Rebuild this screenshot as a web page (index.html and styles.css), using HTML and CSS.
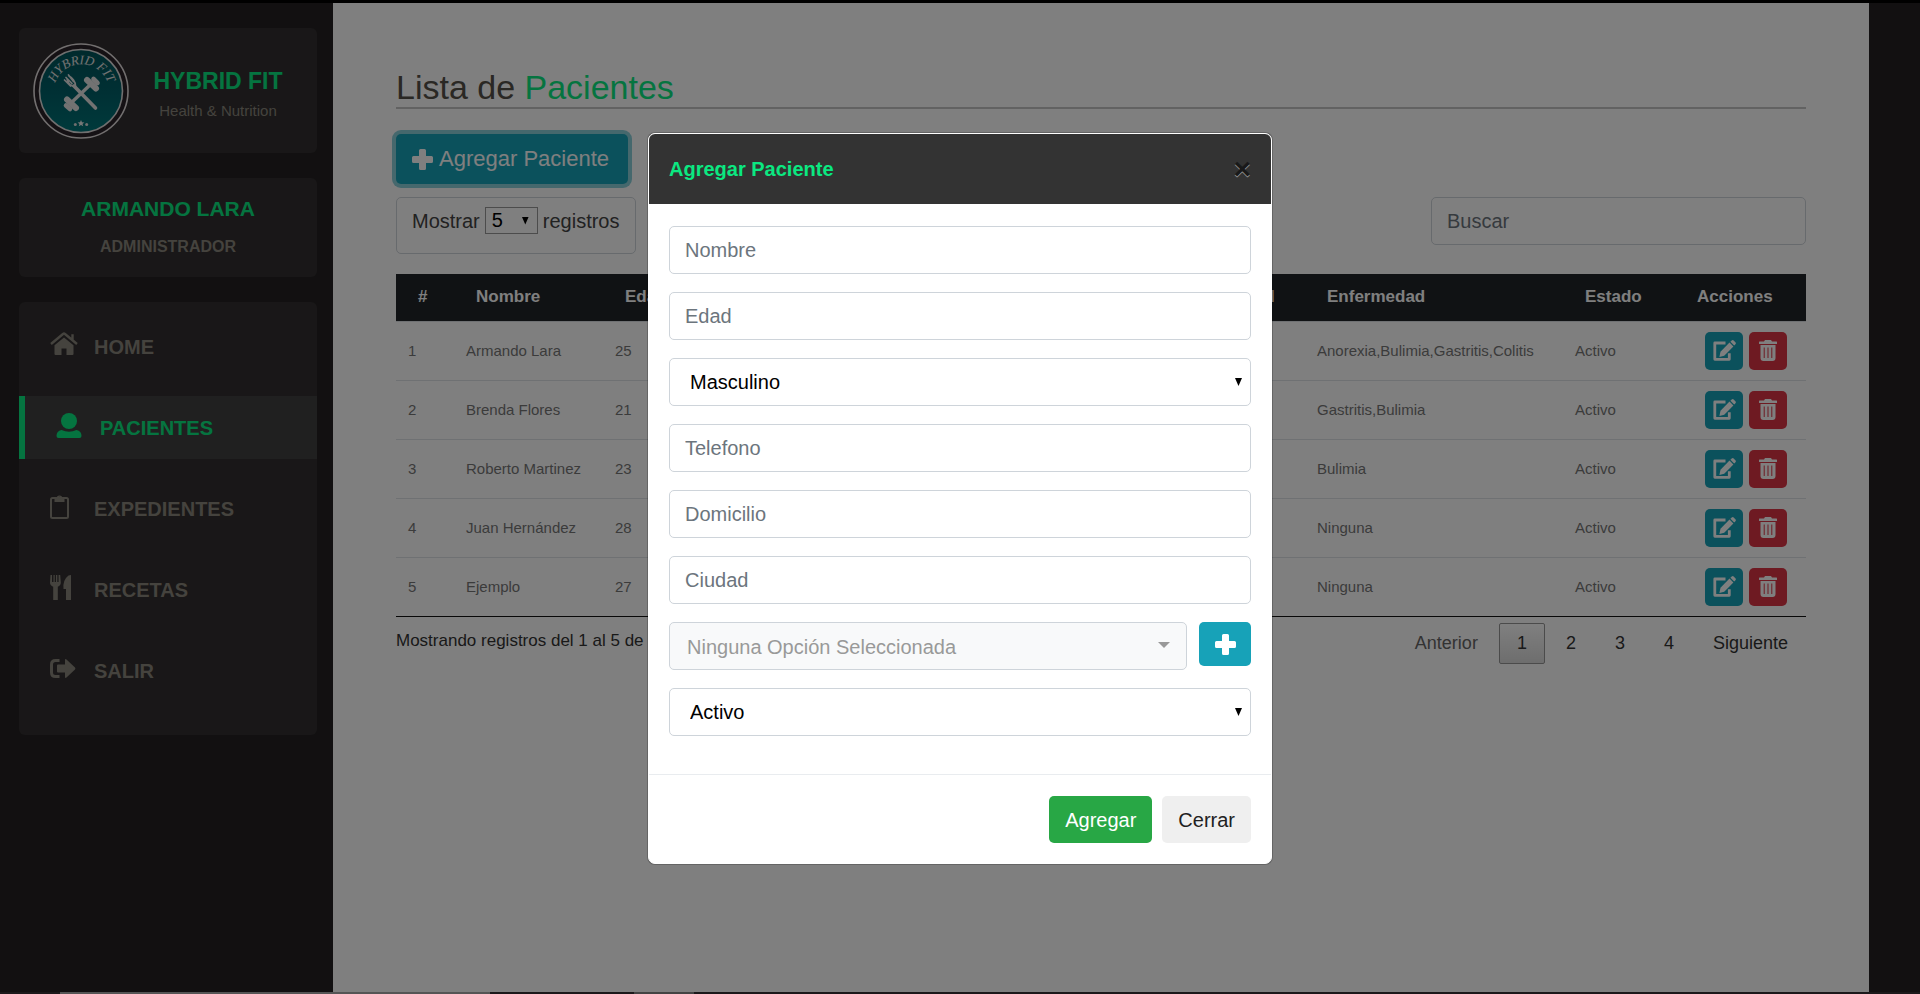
FILE: index.html
```html
<!DOCTYPE html>
<html lang="es">
<head>
<meta charset="utf-8">
<title>Hybrid Fit - Pacientes</title>
<link rel="stylesheet" href="styles.css">
</head>
<body>
<svg class="symbols" aria-hidden="true">
  <symbol id="plus" viewBox="0 0 21 21"><path d="M8.500 0h4q1.500 0 1.500 1.500V7h5.500Q21 7 21 8.500v4q0 1.500-1.500 1.500H14v5.500q0 1.500-1.500 1.500h-4Q7 21 7 19.500V14H1.500Q0 14 0 12.500v-4Q0 7 1.500 7H7V1.500Q7 0 8.500 0z"/></symbol>
  <symbol id="edit" viewBox="0 0 23 21"><path d="M12.500 3H1.800v16.300h14.500v-6" fill="none" stroke="currentColor" stroke-width="2.800" stroke-linejoin="round"/><path d="M16.500 2.600l3.900 3.900-9.200 9.200-4.800 1.300 1.100-5.200z"/><path d="M17.400 1.700l1.300-1.200q1-.9 2 0l1.700 1.700q.9 1 0 2l-1.200 1.300z"/></symbol>
  <symbol id="trash" viewBox="0 0 18 21"><path d="M6 0h6l1 1.500h4.500q.5 0 .5.500v2H0V2q0-.5.500-.5H5z"/><path fill-rule="evenodd" d="M1.500 5h15v13q0 3-3 3h-9q-3 0-3-3zM4.700 7.500v10.500h1V7.500zM8.500 7.500v10.500h1V7.500zM12.300 7.500v10.500h1V7.500z"/></symbol>
</svg>
<div class="screen-edge"></div>
<div class="shell">
  <aside class="sidebar">
    <section class="card brand">
      <svg class="logo" viewBox="0 0 96 96" role="img" aria-label="Hybrid Fit">
        <defs>
          <linearGradient id="disc" x1="0" y1="0" x2="0" y2="1"><stop offset="0" stop-color="#00545a"/><stop offset=".5" stop-color="#006068"/><stop offset="1" stop-color="#007478"/></linearGradient>
          <path id="arc" d="M21 44A28 28 0 0 1 76 44"/>
        </defs>
        <circle cx="48" cy="48" r="47" fill="#2b2228" stroke="#e4dede" stroke-width="1.600"/>
        <circle cx="48" cy="48" r="41.500" fill="url(#disc)" stroke="#e0dede" stroke-width="1.600"/>
        <text class="logo-text"><textPath href="#arc" startOffset="50%" text-anchor="middle">HYBRID FIT</textPath></text>
        <g fill="none" stroke="#e4e4e4" stroke-linecap="round">
          <path d="M41 43L62.500 65" stroke-width="3.600"/>
          <path d="M34 35.500q1 5 3.500 6.500t5 1.500q0-4-2-6.500T36 33M31.500 37l6 6M33 34.500l6 6M35.500 32l5 6.500" stroke-width="1.700"/>
          <path d="M38 60L58 41" stroke-width="3.400"/>
          <path d="M34 56.500l9 8.500M54 37l9 8.500" stroke-width="6"/>
          <path d="M33 62.500l4 3.500M60.500 36l4 4" stroke-width="4.600"/>
        </g>
        <path d="M48 77l1 2.200 2.400.2-1.900 1.500.7 2.400-2.200-1.300-2.200 1.300.7-2.400-1.900-1.500 2.400-.2z" fill="#eee"/>
        <circle cx="42.300" cy="81.500" r="1.500" fill="#ddd"/><circle cx="53.700" cy="81.500" r="1.500" fill="#ddd"/>
      </svg>
      <div class="brand-text"><h1>HYBRID FIT</h1><p>Health &amp; Nutrition</p></div>
    </section>
    <section class="card user"><h2>ARMANDO LARA</h2><p>ADMINISTRADOR</p></section>
    <nav class="card menu">
      <a href="#home"><svg class="nav-icon" viewBox="0 0 28 25"><path d="M14 5.500L4.500 13.300V22q0 1 1 1h6v-6.500h5V23h6q1 0 1-1v-8.700z"/><path d="M1 12L13 2q1-.8 2 0l12 10M22.500 8V2.300" fill="none" stroke="currentColor" stroke-width="2.400"/></svg>HOME</a>
      <a href="#pacientes" class="active"><svg class="nav-icon" viewBox="0 0 28 25"><circle cx="13" cy="8" r="8"/><path d="M5.500 17q7.500 3.500 15 0 5 1 5 6 0 2-2 2h-21q-2 0-2-2 0-5 5-6z"/></svg>PACIENTES</a>
      <a href="#expedientes"><svg class="nav-icon" viewBox="0 0 28 25"><rect x="1" y="4" width="17" height="20" rx="1.500" fill="none" stroke="currentColor" stroke-width="2"/><path fill-rule="evenodd" d="M4.500 8V4.200h2.200a2.800 2.800 0 0 1 5.600 0h2.200V8zM8.500 3.700a1 1 0 0 0 2 0a1 1 0 0 0-2 0z"/></svg>EXPEDIENTES</a>
      <a href="#recetas"><svg class="nav-icon" viewBox="0 0 28 25"><path d="M.5 0H2v7h1.500V0h1.200v7H6V0h1.300v7h1.300V0h1.600l.6 7.500q0 3-3 4.200V25H3.200V11.700Q0 10.500 0 7.500z"/><path d="M21 0v25h-5V14h-2.500q-1-9 5-13.500Q19.500 0 21 0z"/></svg>RECETAS</a>
      <a href="#salir"><svg class="nav-icon" viewBox="0 0 28 25"><path d="M9.500 4.500h-4q-4 0-4 4v8q0 4 4 4h4" fill="none" stroke="currentColor" stroke-width="3"/><path d="M7 9.500q0-1 1-1h7V4q0-1.500 1.500-.6L25 11.500q.8 1 0 2l-8.500 8.100q-1.500.9-1.500-.6v-4.500H8q-1 0-1-1z"/></svg>SALIR</a>
    </nav>
  </aside>
  <main class="content">
    <h2 class="page-title">Lista de <span>Pacientes</span></h2>
    <button type="button" class="btn btn-info btn-add"><svg class="icon-plus"><use href="#plus"/></svg>Agregar Paciente</button>
    <div class="controls">
      <label class="length">Mostrar <span class="pick pick-small"><select><option>5</option></select></span> registros</label>
      <input class="field search" type="search" placeholder="Buscar" aria-label="Buscar">
    </div>
    <table>
      <colgroup><col class="c-num"><col class="c-name"><col class="c-age"><col><col class="c-city"><col class="c-illness"><col class="c-state"><col class="c-actions"></colgroup>
      <thead><tr><th>#</th><th>Nombre</th><th>Edad</th><td></td><th>Ciudad</th><th>Enfermedad</th><th>Estado</th><th>Acciones</th></tr></thead>
      <tbody>
        <tr><td>1</td><td>Armando Lara</td><td>25</td><td></td><td></td><td>Anorexia,Bulimia,Gastritis,Colitis</td><td>Activo</td><td><div class="actions"><button type="button" class="btn btn-info" aria-label="Editar"><svg class="icon-edit"><use href="#edit"/></svg></button><button type="button" class="btn btn-danger" aria-label="Eliminar"><svg class="icon-trash"><use href="#trash"/></svg></button></div></td></tr>
        <tr><td>2</td><td>Brenda Flores</td><td>21</td><td></td><td></td><td>Gastritis,Bulimia</td><td>Activo</td><td><div class="actions"><button type="button" class="btn btn-info" aria-label="Editar"><svg class="icon-edit"><use href="#edit"/></svg></button><button type="button" class="btn btn-danger" aria-label="Eliminar"><svg class="icon-trash"><use href="#trash"/></svg></button></div></td></tr>
        <tr><td>3</td><td>Roberto Martinez</td><td>23</td><td></td><td></td><td>Bulimia</td><td>Activo</td><td><div class="actions"><button type="button" class="btn btn-info" aria-label="Editar"><svg class="icon-edit"><use href="#edit"/></svg></button><button type="button" class="btn btn-danger" aria-label="Eliminar"><svg class="icon-trash"><use href="#trash"/></svg></button></div></td></tr>
        <tr><td>4</td><td>Juan Hernández</td><td>28</td><td></td><td></td><td>Ninguna</td><td>Activo</td><td><div class="actions"><button type="button" class="btn btn-info" aria-label="Editar"><svg class="icon-edit"><use href="#edit"/></svg></button><button type="button" class="btn btn-danger" aria-label="Eliminar"><svg class="icon-trash"><use href="#trash"/></svg></button></div></td></tr>
        <tr><td>5</td><td>Ejemplo</td><td>27</td><td></td><td></td><td>Ninguna</td><td>Activo</td><td><div class="actions"><button type="button" class="btn btn-info" aria-label="Editar"><svg class="icon-edit"><use href="#edit"/></svg></button><button type="button" class="btn btn-danger" aria-label="Eliminar"><svg class="icon-trash"><use href="#trash"/></svg></button></div></td></tr>
      </tbody>
    </table>
    <div class="table-footer">
      <p>Mostrando registros del 1 al 5 de</p>
      <nav class="pages" aria-label="Páginas"><a href="#prev" class="off">Anterior</a><a href="#1" class="current">1</a><a href="#2">2</a><a href="#3">3</a><a href="#4">4</a><a href="#next">Siguiente</a></nav>
    </div>
  </main>
  <div class="backdrop">
    <form class="modal" role="dialog" aria-labelledby="modal-title">
      <header><h3 id="modal-title">Agregar Paciente</h3><button type="button" class="close" aria-label="Cerrar ventana">×</button></header>
      <div class="modal-body">
        <input class="field" type="text" placeholder="Nombre" aria-label="Nombre">
        <input class="field" type="text" placeholder="Edad" aria-label="Edad">
        <span class="pick"><select class="field" aria-label="Sexo"><option>Masculino</option></select></span>
        <input class="field" type="text" placeholder="Telefono" aria-label="Telefono">
        <input class="field" type="text" placeholder="Domicilio" aria-label="Domicilio">
        <input class="field" type="text" placeholder="Ciudad" aria-label="Ciudad">
        <div class="illness">
          <span class="pick pick-light"><select class="field" disabled aria-label="Enfermedad"><option>Ninguna Opción Seleccionada</option></select></span>
          <button type="button" class="btn btn-info btn-plus" aria-label="Agregar enfermedad"><svg class="icon-plus"><use href="#plus"/></svg></button>
        </div>
        <span class="pick"><select class="field" aria-label="Estado"><option>Activo</option></select></span>
      </div>
      <footer><button type="button" class="btn btn-success">Agregar</button><button type="button" class="btn btn-plain">Cerrar</button></footer>
    </form>
  </div>
</div>
<div class="taskbar-edge"></div>
</body>
</html>
```
FILE: styles.css
```css
* { box-sizing: border-box; }
body {
  margin: 0;
  min-height: 100vh;
  display: flex;
  flex-direction: column;
  background: #000;
  color: #212529;
  font: 20px/30px "Liberation Sans", Arial, sans-serif;
}
h1, h2, h3, p { margin: 0; }
a { color: inherit; text-decoration: none; }
button, input, select { font: inherit; color: inherit; margin: 0; }
svg { display: block; fill: currentColor; flex: none; }
.symbols { display: none; }

.screen-edge { height: 3px; }
.taskbar-edge {
  height: 2px;
  background: linear-gradient(90deg, #1c191b 60px, #555 60px 490px, #1c191b 490px 634px, #444 634px 694px, #1c191b 694px);
}
.shell {
  position: relative;
  flex: 1;
  display: flex;
  padding-right: 51px;
  background: #242122;
}

/* Sidebar */
.sidebar {
  flex: 0 0 333px;
  padding: 25px 16px 25px 19px;
  display: flex;
  flex-direction: column;
  gap: 25px;
  color: #8a867c;
}
.card { background: #322f30; border-radius: 6px; }
.brand { display: flex; align-items: center; height: 125px; padding: 0 14px; }
.logo { width: 96px; height: 96px; }
.logo-text { font: italic 13px "Liberation Serif", serif; fill: #e4e4e4; }
.brand-text { flex: 1; padding: 10px 0 0 4px; text-align: center; }
.brand-text h1 { font-size: 23px; line-height: 30px; color: #0be881; }
.brand-text p { font-size: 15px; }
.user { padding: 16px 15px 15px; text-align: center; font-weight: bold; }
.user h2 { font-size: 21px; line-height: 30px; color: #0be881; }
.user p { font-size: 16px; padding: 8px 0 0; }
.menu { display: flex; flex-direction: column; gap: 18px; padding: 13px 0 33px; }
.menu a {
  display: flex;
  align-items: center;
  gap: 16px;
  height: 63px;
  padding-left: 31px;
  font-weight: bold;
}
.menu .active { background: #404040; border-left: 6px solid #0be881; color: #0be881; }
.nav-icon { width: 28px; height: 25px; margin-bottom: 4px; }

/* Patient list */
.content { flex: 1; padding: 64px 63px 40px; background: #fff; }
.page-title {
  border-bottom: 2px solid #c4c4c4;
  font-weight: normal;
  font-size: 34px;
  line-height: 40px;
  color: #555048;
}
.page-title span { color: #0be881; }
.btn {
  display: flex;
  align-items: center;
  justify-content: center;
  border: 0;
  border-radius: 5px;
  padding: 0;
  color: #fff;
}
.btn-info { background: #17a2b8; }
.btn-danger { background: #dc3545; }
.btn-success { background: #28a745; }
.btn-plain { background: #efefef; color: #212121; }
.btn-add {
  height: 50px;
  margin-top: 25px;
  padding: 0 19px 0 16px;
  gap: 6px;
  font-size: 22px;
  box-shadow: 0 0 0 4px rgba(23, 162, 184, .5);
}
.icon-plus { width: 21px; height: 21px; }
.controls {
  display: flex;
  align-items: flex-start;
  justify-content: space-between;
  margin: 13px 0 20px;
}
.length {
  display: flex;
  gap: 5px;
  height: 57px;
  padding: 8px 15px;
  border: 1px solid #ced4da;
  border-radius: 5px;
  color: #444;
}
.field {
  display: block;
  width: 100%;
  height: 48px;
  padding: 1px 15px 0;
  border: 1px solid #ced4da;
  border-radius: 5px;
  background: #fff;
}
.field::placeholder { color: #6c757d; opacity: 1; }
.search { width: 375px; appearance: none; }

.pick { position: relative; display: block; }
.pick select { appearance: none; color: #000; }
.pick select.field { padding: 0 20px; }
.pick::after {
  content: "";
  position: absolute;
  right: 9px;
  top: 50%;
  width: 7px;
  height: 8px;
  margin-top: -4px;
  background: #000;
  clip-path: polygon(0 0, 100% 0, 50% 100%);
  pointer-events: none;
}
.pick-small { height: 27px; margin-top: 1px; }
.pick-small select {
  display: block;
  width: 53px;
  height: 27px;
  padding: 0 6px;
  border: 1px solid #999;
  border-radius: 0;
  background: #fff;
  line-height: 25px;
}
.pick-light { flex: 1; }
.pick-light select.field { background: #f8f9fa; color: #999; opacity: 1; padding: 2px 17px 0; }
.pick-light::after { right: 17px; width: 12px; height: 6px; background: #999; }

table { width: 100%; table-layout: fixed; border-collapse: collapse; border-bottom: 1px solid #111; }
.c-num { width: 58px; }
.c-name { width: 149px; }
.c-age { width: 110px; }
.c-city { width: 110px; }
.c-illness { width: 258px; }
.c-state { width: 112px; }
.c-actions { width: 131px; }
thead { background: #212529; color: #fff; }
th { height: 47px; padding: 0 0 0 22px; text-align: left; font-size: 17px; }
tbody td {
  height: 59px;
  padding: 0 0 0 12px;
  border-top: 1px solid #dee2e6;
  font-size: 15px;
  color: #777;
}
.actions { display: flex; justify-content: flex-end; gap: 6px; padding-right: 19px; }
.actions .btn { width: 38px; height: 38px; }
.icon-edit { width: 23px; height: 21px; }
.icon-trash { width: 18px; height: 21px; }

.table-footer { display: flex; justify-content: space-between; padding-top: 6px; color: #333; }
.table-footer p { font-size: 17px; line-height: 36px; }
.pages { display: flex; gap: 3px; font-size: 18px; line-height: 39px; }
.pages a { padding: 0 17px; border: 1px solid transparent; }
.pages .off { color: #666; }
.pages .current { border-color: #979797; border-radius: 2px; background: linear-gradient(#fff, #dcdcdc); }

/* Dialog */
.backdrop { position: absolute; inset: 0; background: rgba(0, 0, 0, .5); }
.modal {
  width: 624px;
  margin: 130px auto 0;
  border: 1px solid #fff;
  border-radius: 7px;
  background: #fff;
  box-shadow: 0 0 0 1px rgba(0, 0, 0, .2);
}
.modal header {
  display: flex;
  align-items: center;
  justify-content: space-between;
  height: 70px;
  padding: 0 20px;
  border-radius: 6px 6px 0 0;
  background: #333;
}
.modal h3 { font-size: 20px; color: #0be881; }
.close {
  padding: 0;
  border: 0;
  background: none;
  color: #000;
  font-size: 30px;
  font-weight: bold;
  text-shadow: 0 1px 0 #fff;
  opacity: .5;
}
.modal-body { display: flex; flex-direction: column; gap: 18px; padding: 22px 20px 38px; }
.illness { display: flex; gap: 12px; }
.btn-plus { width: 52px; height: 44px; }
.modal footer {
  display: flex;
  justify-content: flex-end;
  gap: 10px;
  padding: 21px 20px 20px;
  border-top: 1px solid #e9ecef;
}
.modal footer .btn { height: 47px; padding: 0 16px; }
```
